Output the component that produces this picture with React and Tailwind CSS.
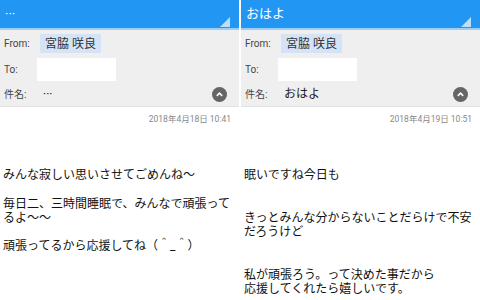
import React from "react";

const FONT = { fontFamily: 'Roboto, "Noto Sans CJK JP", sans-serif' };

function MailPanel({ title, subject, date, lines }) {
  return (
    <div className="w-[239px] h-[300px] flex flex-col overflow-hidden bg-white">
      <div className="h-[28px] bg-[#2196f3] relative flex items-center px-[5px] text-white text-[13px]">
        <span>{title}</span>
        <svg className="absolute right-[9px] bottom-[1px]" width="10" height="10" viewBox="0 0 10 10">
          <polygon points="10,0 10,10 0,10" fill="#bbdefb" />
        </svg>
      </div>
      <div className="h-[2px] bg-[#9ccff7]" />
      <div className="h-[77px] bg-[#efefef] border-b border-[#e2e2e2] flex flex-col text-[10px] text-[#444]">
        <div className="h-[26px] flex items-center pt-[1px]">
          <span className="w-[40px] pl-[4px]">From:</span>
          <span className="bg-[#d5e3f6] h-[19px] px-[5px] flex items-center text-[12px] text-[#333]">宮脇 咲良</span>
        </div>
        <div className="h-[26px] flex items-center">
          <span className="w-[37px] pl-[4px]">To:</span>
          <span className="bg-white w-[79px] h-[23px]" />
        </div>
        <div className="h-[24px] flex items-center pr-[12px]">
          <span className="w-[43px] pl-[4px]">件名:</span>
          <span className="flex-1 text-[12px] text-[#222]">{subject}</span>
          <span className="w-[15px] h-[15px] rounded-full bg-[#666] flex items-center justify-center">
            <svg width="9" height="9" viewBox="0 0 10 10">
              <path d="M2 6.5 L5 3.5 L8 6.5" stroke="white" strokeWidth="1.8" fill="none" />
            </svg>
          </span>
        </div>
      </div>
      <div className="flex-1 flex flex-col px-[3px]">
        <div className="text-right text-[8.5px] text-[#888] pr-[5px] pt-[6px] h-[22px]">{date}</div>
        <div className="pt-[39px] text-[12px] leading-[14.3px] text-[#111]">
          {lines.map((l, i) => (
            <div key={i} className="min-h-[14.3px]">{l}</div>
          ))}
        </div>
      </div>
    </div>
  );
}

export default function App() {
  return (
    <div className="w-[480px] h-[300px] flex gap-[2px] bg-white" style={FONT}>
      <MailPanel
        title="···"
        subject="···"
        date="2018年4月18日 10:41"
        lines={[
          "みんな寂しい思いさせてごめんね～",
          "",
          "毎日二、三時間睡眠で、みんなで頑張って",
          "るよ～～",
          "",
          "頑張ってるから応援してね（＾_＾）",
        ]}
      />
      <MailPanel
        title="おはよ"
        subject="おはよ"
        date="2018年4月19日 10:51"
        lines={[
          "眠いですね今日も",
          "",
          "",
          "きっとみんな分からないことだらけで不安",
          "だろうけど",
          "",
          "",
          "私が頑張ろう。って決めた事だから",
          "応援してくれたら嬉しいです。",
        ]}
      />
    </div>
  );
}
